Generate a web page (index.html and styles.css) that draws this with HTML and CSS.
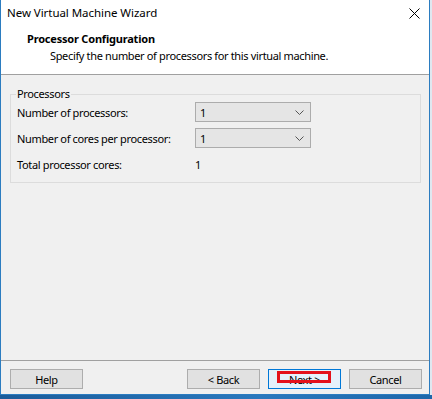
FILE: index.html
```html
<!DOCTYPE html>
<html lang="en">
<head>
    <meta charset="UTF-8">
    <title>New Virtual Machine Wizard</title>
    <link rel="stylesheet" href="styles.css">
</head>
<body>
    <div class="wizard">
        <div class="title-bar">
            <span class="title">New Virtual Machine Wizard</span>
            <svg class="close" width="11" height="11" viewBox="0 0 11 11">
                <path d="M0.5 0.5 L10.5 10.5 M10.5 0.5 L0.5 10.5" stroke="#000" stroke-width="1" fill="none"/>
            </svg>
        </div>

        <div class="page-header">
            <div class="page-title">Processor Configuration</div>
            <div class="page-desc">Specify the number of processors for this virtual machine.</div>
        </div>

        <div class="page-body">
            <fieldset class="group">
                <legend>Processors</legend>
                <div class="form-grid">
                    <label>Number of processors:</label>
                    <div class="combo"><span>1</span><svg width="9" height="5" viewBox="0 0 9 5"><path d="M0.5 0.5 L4.5 4.5 L8.5 0.5" stroke="#555" fill="none"/></svg></div>

                    <label>Number of cores per processor:</label>
                    <div class="combo"><span>1</span><svg width="9" height="5" viewBox="0 0 9 5"><path d="M0.5 0.5 L4.5 4.5 L8.5 0.5" stroke="#555" fill="none"/></svg></div>

                    <label>Total processor cores:</label>
                    <div class="value">1</div>
                </div>
            </fieldset>
        </div>

        <div class="footer">
            <button class="btn">Help</button>
            <div class="spacer"></div>
            <button class="btn">&lt; Back</button>
            <button class="btn btn-default">Next &gt;<span class="mark"></span></button>
            <button class="btn">Cancel</button>
        </div>
    </div>
</body>
</html>
```

FILE: styles.css
```css
body {
    margin: 0;
    width: 432px;
    height: 399px;
    overflow: hidden;
    background: linear-gradient(90deg, #1b5c9a, #2a78bd 60%, #1d67aa);
    font-family: "Noto Sans", "Open Sans", sans-serif;
    font-size: 11px;
    letter-spacing: -0.35px;
    color: #000;
}

.wizard {
    width: 430px;
    height: 395px;
    box-sizing: border-box;
    border: 1px solid #2b7cc0;
    border-top: none;
    background-color: #f0f0f0;
    display: flex;
    flex-direction: column;
    box-shadow: 1px 0 0 #dfe8f0, 2px 0 0 #dfe8f0;
}

.title-bar {
    height: 28px;
    box-sizing: border-box;
    background: #fff;
    display: flex;
    align-items: center;
    justify-content: space-between;
    padding: 0 9px 2px 6px;
}

.title {
    font-size: 11.5px;
    letter-spacing: -0.05px;
    padding-bottom: 2px;
}

.page-header {
    height: 47px;
    background: #fff;
    border-bottom: 1px solid #a0a0a0;
    box-sizing: border-box;
    padding: 3px 0 0 26px;
}

.page-title {
    font-weight: bold;
    height: 17px;
    line-height: 16px;
    letter-spacing: -0.2px;
}

.page-desc {
    padding-left: 23px;
    line-height: 16px;
}

.page-body {
    flex: 1;
    padding: 12px 8px 0 9px;
}

.group {
    margin: 0;
    border: 1px solid #dcdcdc;
    padding: 1px 0 10px 6px;
    height: 96px;
    box-sizing: border-box;
}

.group legend {
    padding: 0 1px;
    margin-left: -1px;
    line-height: 14px;
}

.form-grid {
    display: grid;
    grid-template-columns: 178px 116px;
    grid-template-rows: 20px 20px 20px;
    row-gap: 6px;
    align-items: center;
}

.combo {
    height: 20px;
    box-sizing: border-box;
    border: 1px solid #acacac;
    background: #e5e5e5;
    display: flex;
    align-items: center;
    justify-content: space-between;
    padding: 0 6px 0 4px;
}

.footer {
    height: 34px;
    box-sizing: border-box;
    border-top: 1px solid #a0a0a0;
    display: flex;
    align-items: flex-start;
    gap: 8px;
    padding: 8px 7px 0 9px;
}

.spacer {
    flex: 1;
}

.btn {
    position: relative;
    width: 73px;
    height: 20px;
    padding: 0;
    font-family: inherit;
    font-size: 11px;
    letter-spacing: -0.35px;
    color: #000;
    background: #e1e1e1;
    border: 1px solid #adadad;
}

.btn-default {
    background: #e5f1fb;
    border-color: #0078d7;
}

/* red annotation box over the Next button */
.mark {
    position: absolute;
    left: 8px;
    top: 1px;
    width: 54px;
    height: 12px;
    box-sizing: border-box;
    border: 3px solid #e4111b;
}
```
